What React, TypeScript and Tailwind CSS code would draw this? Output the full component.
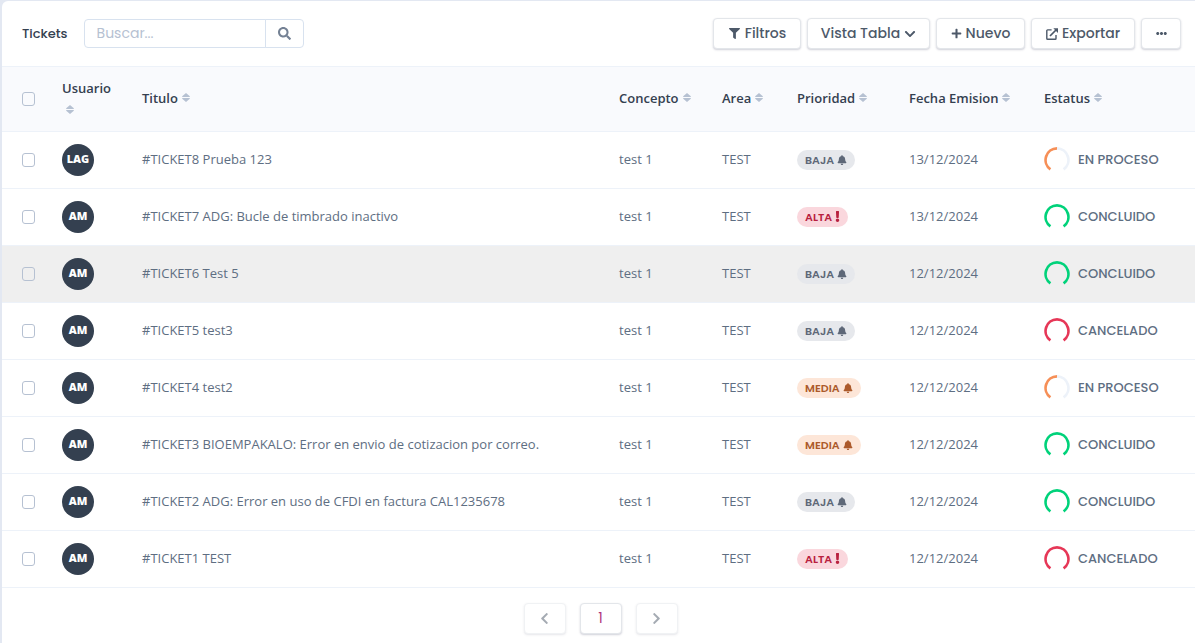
import {
  FaBell,
  FaChevronDown,
  FaChevronLeft,
  FaChevronRight,
  FaEllipsisH,
  FaExclamation,
  FaFilter,
  FaPlus,
  FaSearch,
} from 'react-icons/fa';

type Priority = 'BAJA' | 'MEDIA' | 'ALTA';
type Status = 'EN PROCESO' | 'CONCLUIDO' | 'CANCELADO';

interface Ticket {
  id: number;
  user: string;
  title: string;
  priority: Priority;
  date: string;
  status: Status;
}

const tickets: Ticket[] = [
  { id: 8, user: 'LAG', title: 'Prueba 123', priority: 'BAJA', date: '13/12/2024', status: 'EN PROCESO' },
  { id: 7, user: 'AM', title: 'ADG: Bucle de timbrado inactivo', priority: 'ALTA', date: '13/12/2024', status: 'CONCLUIDO' },
  { id: 6, user: 'AM', title: 'Test 5', priority: 'BAJA', date: '12/12/2024', status: 'CONCLUIDO' },
  { id: 5, user: 'AM', title: 'test3', priority: 'BAJA', date: '12/12/2024', status: 'CANCELADO' },
  { id: 4, user: 'AM', title: 'test2', priority: 'MEDIA', date: '12/12/2024', status: 'EN PROCESO' },
  { id: 3, user: 'AM', title: 'BIOEMPAKALO: Error en envio de cotizacion por correo.', priority: 'MEDIA', date: '12/12/2024', status: 'CONCLUIDO' },
  { id: 2, user: 'AM', title: 'ADG: Error en uso de CFDI en factura CAL1235678', priority: 'BAJA', date: '12/12/2024', status: 'CONCLUIDO' },
  { id: 1, user: 'AM', title: 'TEST', priority: 'ALTA', date: '12/12/2024', status: 'CANCELADO' },
];

const badgeStyles: Record<Priority, string> = {
  BAJA: 'bg-[#e6e8ec] text-[#5e6878]',
  MEDIA: 'bg-[#fde6d8] text-[#ac5a2b]',
  ALTA: 'bg-[#fad7dd] text-[#b8213f]',
};

const ringColors: Record<Status, string> = {
  'EN PROCESO': '#f68f57',
  CONCLUIDO: '#00d27a',
  CANCELADO: '#e63757',
};

const headFont = "font-['Poppins','Inter',sans-serif]";
const buttonStyle =
  'flex h-[31px] items-center justify-center gap-1 rounded border border-[#e3e6ea] bg-white text-[14px] text-[#4d5969] shadow-[0_1px_2px_rgba(43,45,80,0.22)]';

function SortIcon() {
  return (
    <svg className="inline-block h-[9px] w-[8px] fill-[#b6c1d2]" viewBox="0 0 8 9" aria-hidden="true">
      <path d="M4 0 7.8 3.2V4H.2v-.8zM.2 5h7.6v.8L4 9 .2 5.8z" />
    </svg>
  );
}

function ExportIcon() {
  return (
    <svg className="size-3" viewBox="0 0 12 12" fill="none" stroke="currentColor" strokeWidth="1.4" aria-hidden="true">
      <path d="M5.6 1.9H1.6a.8.8 0 0 0-.8.8v7.7c0 .4.4.8.8.8h7.6c.4 0 .8-.4.8-.8V7" />
      <path d="M4 8 10 2" strokeWidth="1.7" />
      <path d="M7.3.2H12v4.7z" fill="currentColor" stroke="none" />
    </svg>
  );
}

function Check({ label }: { label: string }) {
  return (
    <input
      type="checkbox"
      aria-label={label}
      className="block h-[14px] w-[13px] appearance-none rounded-[3px] border border-[#b6c1d2] checked:bg-[#2c7be5]"
    />
  );
}

function Badge({ priority }: { priority: Priority }) {
  const Icon = priority === 'ALTA' ? FaExclamation : FaBell;
  return (
    <span
      className={`${headFont} ${badgeStyles[priority]} inline-flex h-5 items-center gap-[3px] rounded-full px-2 align-middle text-[11px] font-semibold`}
    >
      {priority}
      <Icon className={priority === 'ALTA' ? 'h-[11px] w-[5px]' : 'size-[10px]'} />
    </span>
  );
}

function Ring({ status }: { status: Status }) {
  const color = ringColors[status];
  const left = 'M6.4 22.4A11.6 11.6 0 0 1 13 1.4';
  const right = 'M13 1.4A11.6 11.6 0 0 1 19.6 22.4';
  return (
    <svg className="h-[26px] w-[26px] shrink-0" viewBox="0 0 26 26" fill="none" strokeWidth="2.7" aria-hidden="true">
      <path d={right} stroke={status === 'EN PROCESO' ? '#edf2f9' : color} />
      <path d={left} stroke={color} />
    </svg>
  );
}

const columns = ['Usuario', 'Titulo', 'Concepto', 'Area', 'Prioridad', 'Fecha Emision', 'Estatus'];

export default function App() {
  return (
    <div className="min-h-screen bg-[#e3e8f2] pt-px pl-0.5 font-['Open_Sans',sans-serif]">
      <main className="min-h-[642px] rounded-tl-md bg-white">
        <header className={`${headFont} flex h-[66px] items-center justify-between border-b border-[#edf2f9] pr-3.5 pl-5`}>
          <div className="flex items-center gap-4">
            <h1 className="text-[13px] font-medium text-[#344050]">Tickets</h1>
            <form className="flex h-[29px]" onSubmit={(e) => e.preventDefault()}>
              <input
                type="text"
                aria-label="Buscar"
                placeholder="Buscar..."
                className="w-[182px] rounded-l border border-[#d8e2ef] px-3 text-[14px] text-[#344050] outline-none placeholder:text-[#b6c1d2]"
              />
              <button
                type="submit"
                aria-label="Buscar tickets"
                className="-ml-px flex w-[39px] items-center justify-center rounded-r border border-[#d8e2ef] text-[#748194]"
              >
                <FaSearch className="size-[13px]" />
              </button>
            </form>
          </div>
          <div className="flex items-center gap-1.5">
            <button type="button" className={`${buttonStyle} w-[88px] font-medium`}>
              <FaFilter className="h-[11px] w-[13px]" />
              Filtros
            </button>
            <button type="button" className={`${buttonStyle} w-[123px] font-medium`}>
              Vista Tabla
              <FaChevronDown className="size-3" />
            </button>
            <button type="button" className={`${buttonStyle} w-[89px] font-medium`}>
              <FaPlus className="size-[11px]" />
              Nuevo
            </button>
            <button type="button" className={`${buttonStyle} w-[104px] font-medium`}>
              <ExportIcon />
              Exportar
            </button>
            <button type="button" aria-label="Más opciones" className={`${buttonStyle} w-10`}>
              <FaEllipsisH className="size-[11px]" />
            </button>
          </div>
        </header>

        <table className="w-full table-fixed border-collapse text-left text-[13px]">
          <colgroup>
            <col className="w-12" />
            <col className="w-20" />
            <col />
            <col className="w-[103px]" />
            <col className="w-[75px]" />
            <col className="w-[112px]" />
            <col className="w-[135px]" />
            <col className="w-[163px]" />
          </colgroup>
          <thead>
            <tr className="h-[64px] border-b border-[#edf2f9] bg-[#f9fafd] text-[#344050]">
              <th className="pl-5">
                <Check label="Seleccionar todos" />
              </th>
              {columns.map((name) => (
                <th key={name} className="pb-0.5 pl-3 leading-5 font-semibold">
                  {name === 'Usuario' ? (
                    <>
                      {name}
                      <span className="block pl-1 leading-5">
                        <SortIcon />
                      </span>
                    </>
                  ) : (
                    <span className="flex items-center gap-1">
                      {name}
                      <SortIcon />
                    </span>
                  )}
                </th>
              ))}
            </tr>
          </thead>
          <tbody className="text-[#5e6e82]">
            {tickets.map((t) => (
              <tr key={t.id} className={`h-[57px] border-b border-[#edf2f9] ${t.id === 6 ? 'bg-[#efefef]' : ''}`}>
                <td className="pl-5">
                  <Check label={`Seleccionar ticket ${t.id}`} />
                </td>
                <td className="pl-3">
                  <div className="flex size-8 items-center justify-center rounded-full bg-[#344050] text-[11px] font-extrabold text-white">
                    {t.user}
                  </div>
                </td>
                <td className="truncate pl-3">
                  #TICKET{t.id} {t.title}
                </td>
                <td className="pl-3">test 1</td>
                <td className="pl-3">TEST</td>
                <td className="pl-3">
                  <Badge priority={t.priority} />
                </td>
                <td className="pl-3">{t.date}</td>
                <td className="pl-3">
                  <div className={`${headFont} flex items-center gap-2 text-[13px] font-medium whitespace-nowrap`}>
                    <Ring status={t.status} />
                    {t.status}
                  </div>
                </td>
              </tr>
            ))}
          </tbody>
        </table>

        <nav aria-label="Paginación" className={`${headFont} flex justify-center gap-3.5 pt-[15px] pl-1`}>
          <button type="button" disabled aria-label="Anterior" className={`${buttonStyle} w-[42px] opacity-50`}>
            <FaChevronLeft className="size-[13px]" />
          </button>
          <button type="button" aria-current="page" className={`${buttonStyle} w-[42px]`}>
            <span className="text-[#b0357c]">1</span>
          </button>
          <button type="button" disabled aria-label="Siguiente" className={`${buttonStyle} w-[42px] opacity-50`}>
            <FaChevronRight className="size-[13px]" />
          </button>
        </nav>
      </main>
    </div>
  );
}
